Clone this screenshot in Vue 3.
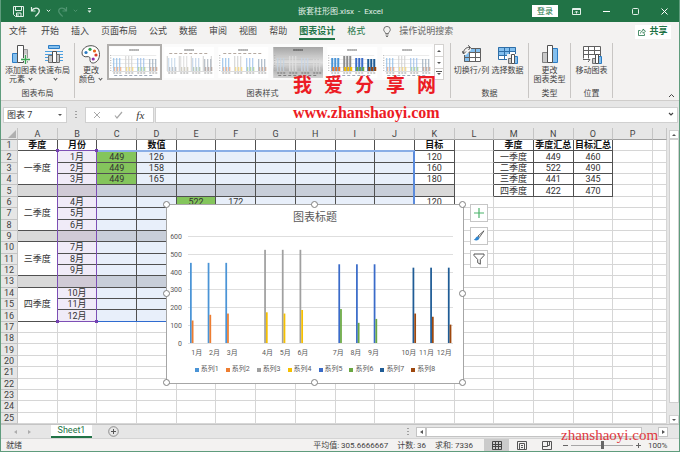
<script setup>
import { ref } from 'vue'

const tabs = ['文件', '开始', '插入', '页面布局', '公式', '数据', '审阅', '视图', '帮助', '图表设计', '格式']
const columns = 'ABCDEFGHIJKLMNOP'.split('').concat('')
const cellName = ref('图表 7')
const formula = ref('')
const zoom = ref(50)

const values = {
  A1: '季度', B1: '月份', D1: '数值', K1: '目标',
  A2: '一季度', A6: '二季度', A10: '三季度', A14: '四季度',
  B2: '1月', B3: '2月', B4: '3月', B6: '4月', B7: '5月', B8: '6月',
  B10: '7月', B11: '8月', B12: '9月', B14: '10月', B15: '11月', B16: '12月',
  C2: '449', C3: '449', C4: '449', D2: '126', D3: '158', D4: '165',
  E6: '522', F6: '172', K2: '120', K3: '160', K4: '180', K6: '120',
  M1: '季度', N1: '季度汇总', O1: '目标汇总',
  M2: '一季度', N2: '449', O2: '460', M3: '二季度', N3: '522', O3: '490',
  M4: '三季度', N4: '441', O4: '345', M5: '四季度', N5: '422', O5: '470'
}
const greens = ['C2', 'C3', 'C4', 'E6']
const quarterStarts = [2, 6, 10, 14]
const spacers = [5, 9, 13]

function rowCells(r) {
  const out = []
  columns.forEach((col, i) => {
    if (i === 0 && r > 1 && r < 17 && !quarterStarts.includes(r) && !spacers.includes(r)) return
    const key = col + r
    const inMain = i <= 10 && r <= 16
    const inSummary = i >= 12 && i <= 14 && r <= 5
    out.push({
      key: key + i,
      text: col ? values[key] || '' : '',
      span: i === 0 && quarterStarts.includes(r) ? 3 : 1,
      cls: {
        ruled: inMain || inSummary,
        edge: i === 11 && r <= 5,
        bold: r === 1,
        category: i === 1 && r > 1 && r < 17,
        series: i > 1 && i < 10 && r > 1 && r < 17,
        spacer: inMain && spacers.includes(r),
        green: greens.includes(key)
      }
    })
  })
  return out
}

const series = [
  { name: '系列1', color: '#4a94d6', at: 0, data: [449, 449, 449] },
  { name: '系列2', color: '#ed7d31', at: 0, data: [126, 158, 165] },
  { name: '系列3', color: '#a0a0a0', at: 4, data: [522, 522, 522] },
  { name: '系列4', color: '#f6c000', at: 4, data: [172, 165, 185] },
  { name: '系列5', color: '#3a6bc9', at: 8, data: [441, 441, 441] },
  { name: '系列6', color: '#6aa842', at: 8, data: [190, 113, 135] },
  { name: '系列7', color: '#1f5c96', at: 12, data: [422, 422, 422] },
  { name: '系列8', color: '#9e480e', at: 12, data: [165, 147, 103] }
]
const months = ['1月', '2月', '3月', '', '4月', '5月', '6月', '', '7月', '8月', '9月', '', '10月', '11月', '12月']
const ticks = [0, 100, 200, 300, 400, 500, 600]
const plotX = 21
const catW = 17.67
const baseY = 113
const unit = 0.1785
const bars = series.flatMap((s, k) =>
  s.data.map((v, j) => ({
    x: plotX + catW * (s.at + j) + 2 + k * 1.75,
    y: baseY - v * unit,
    h: v * unit,
    color: s.color
  }))
)

const soft = ['#8fbce6', '#f0a97c', '#cfcfcf', '#f5d676', '#9dc0ea', '#a9cf90', '#9aacbd', '#c9a088']
const strong = ['#4a94d6', '#ed7d31', '#8c8c8c', '#f6c000', '#3a6bc9', '#6aa842', '#1f5c96', '#9e480e']
const thumbs = [
  { top: false, palette: soft, w: 1, lines: true },
  { top: true, palette: ['#c4d8ea', '#aeb2b8', '#dcdcdc', '#c8c4b4', '#bcd0e6', '#a9bfa4', '#a6b0ba', '#b09c94'], w: 1, vert: true },
  { top: true, palette: soft, w: 1 },
  { top: false, palette: ['#c4d3e2', '#b9b9b9', '#e2e2e2', '#d0d0d0', '#c6d6ea', '#c8c8c8', '#dcdcdc', '#bdbdbd'], w: 1, dark: true, lines: true },
  { top: false, palette: strong, w: 2, lines: true },
  { top: false, palette: soft, w: 1, lines: true }
]
function thumbBars(t) {
  const out = []
  for (let g = 0; g < 4; g++) {
    for (let j = 0; j < 3; j++) {
      const x = 4 + g * 12 + j * 3
      const h = [13, 15, 13, 12][g]
      out.push({ x, y: 24 - h, w: t.w, h, c: t.palette[g * 2] })
      out.push({ x: x + 1, y: 20, w: t.w, h: 4, c: t.palette[g * 2 + 1] })
    }
  }
  return out
}
</script>

<template>
  <div class="app">
    <header class="titlebar">
      <div class="quick">
        <button aria-label="保存"><svg width="11" height="11" viewBox="0 0 11 11"><path d="M.5.5h10v10h-8l-2-2zM2.5.5v4h6v-4M3.500 10.500v-3.500h4.500v3.500M5 8v2" fill="none" stroke="#e4f0e9" /></svg></button>
        <button class="undo" aria-label="撤消"><svg width="11" height="11" viewBox="0 0 11 11"><path d="M1.500 1v4h4M1.800 4.800C3.500 1.500 8.500 1 9.300 4.500c.5 2.500-2.300 4-4 6" fill="none" stroke="#e4f0e9" stroke-width="1.200" /></svg></button>
        <svg width="5" height="4" viewBox="0 0 5 4"><path d="M.8.8l1.700 1.700L4.200.8" fill="none" stroke="#e4f0e9" /></svg>
        <button class="redo" aria-label="恢复"><svg width="11" height="11" viewBox="0 0 11 11"><path d="M9.500 1v4h-4M9.200 4.800C7.500 1.500 2.500 1 1.700 4.500c-.5 2.500 2.300 4 4 6" fill="none" stroke="#4f9470" stroke-width="1.200" /></svg></button>
        <svg width="5" height="4" viewBox="0 0 5 4"><path d="M.8.8l1.700 1.700L4.200.8" fill="none" stroke="#4f9470" /></svg>
        <svg class="more" width="5" height="6" viewBox="0 0 5 6"><path d="M1 .5h3" stroke="#e4f0e9" /><path d="M.5 2.500h4l-2 2.300z" fill="#e4f0e9" /></svg>
      </div>
      <h1>嵌套柱形图.xlsx&nbsp; -&nbsp; Excel</h1>
      <div class="window">
        <button class="login">登录</button>
        <button aria-label="功能区显示选项"><svg width="9" height="7" viewBox="0 0 9 7"><path d="M.5.5h8v6h-8zM.5 1.500h8M4.500 5.500v-2M3 4.500l1.500-1.500L6 4.500" fill="none" stroke="#e4f0e9" /></svg></button>
        <button aria-label="最小化"><svg width="7" height="7" viewBox="0 0 7 7"><path d="M0 3.500h7" stroke="#fff" /></svg></button>
        <button aria-label="最大化"><svg width="7" height="7" viewBox="0 0 7 7"><rect x=".5" y=".5" width="6" height="6" rx="1" fill="none" stroke="#e4f0e9" /></svg></button>
        <button aria-label="关闭"><svg width="7" height="7" viewBox="0 0 7 7"><path d="M.5.5l6 6M6.500.5l-6 6" stroke="#fff" /></svg></button>
      </div>
    </header>

    <nav class="tabs">
      <a v-for="t in tabs" :key="t" href="#" :class="{ current: t === '图表设计', context: t === '格式' }">{{ t }}</a>
      <button class="tell">
        <svg width="8" height="11" viewBox="0 0 8 11"><path d="M2.500 7.500C2.500 6 .7 5.500.7 3.700a3.300 3.300 0 0 1 6.600 0C7.300 5.500 5.500 6 5.500 7.500zM2.500 9h3M3 10.500h2" fill="none" stroke="#555" stroke-width=".8" /></svg>
        <span>操作说明搜索</span>
      </button>
      <button class="share">
        <svg width="8" height="8" viewBox="0 0 8 8"><path d="M2.500 2.500h-2v5h6v-2M2.500 5.500C2.700 3.500 4 2.700 5 2.700V1l2.500 2.300L5 5.300V3.900" fill="none" stroke="#217346" stroke-width=".8" /></svg>
        <span>共享</span>
      </button>
    </nav>

    <section class="ribbon">
      <div class="group layouts">
        <div class="tools">
          <button class="tool">
            <svg width="20" height="19" viewBox="0 0 20 19"><path d="M1.500 8.500h5v9h-5z" fill="#83bfee" stroke="#2b7cc4" /><path d="M12.500 4.500h4v13h-4z" fill="#c9c9c9" stroke="#9a9a9a" /><path d="M6.500.5h6v17h-6z" fill="#fff" stroke="#505050" /><path d="M14.500 9.500v9M10 14.500h9" stroke="#f3f2f1" stroke-width="3" /><path d="M14.500 10v9M10 14.500h9" stroke="#3aa655" stroke-width="1.300" /></svg>
            <span>添加图表<br>元素<i class="down"></i></span>
          </button>
          <button class="tool">
            <svg width="20" height="19" viewBox="0 0 20 19"><path d="M4.500.5h11v3h-11z" fill="#83bfee" stroke="#2b7cc4" /><path d="M1 6.500h18M1 9.500h18M1 12.500h18M1 15.500h18" stroke="#4a9fe0" /><path d="M4.500 10.500h4v7h-4z" fill="#c9c9c9" stroke="#707070" /><path d="M8.500 6.500h4v11h-4z" fill="#fff" stroke="#505050" /><path d="M12.500 9.500h3v8h-3z" fill="#c9c9c9" stroke="#707070" /></svg>
            <span>快速布局<br><i class="down"></i></span>
          </button>
        </div>
        <h2>图表布局</h2>
      </div>

      <div class="group styles">
        <div class="tools">
          <button class="tool">
            <svg width="20" height="19" viewBox="0 0 20 19"><path d="M10 .7C4.500.7 1 4.300 1 8c0 3 2.500 4.200 5 3.700 2.200-.4 3.300.6 3 2.300-.3 2.500 1 4.300 3.300 4C16 17.500 18.500 14 18.500 9.500 18.500 4 14.800.7 10 .7z" fill="#fff" stroke="#505050" /><circle cx="5" cy="7.500" r="1.600" fill="#2b7cc4" /><circle cx="9" cy="4.300" r="1.600" fill="#31a04f" /><circle cx="13.500" cy="6" r="1.600" fill="#e8661b" /><circle cx="15" cy="10" r="1.600" fill="#d93a2b" /><circle cx="12.200" cy="14" r="1.600" fill="#8d2fa8" /></svg>
            <span>更改<br>颜色<i class="down"></i></span>
          </button>
          <div class="gallery">
            <button v-for="(t, i) in thumbs" :key="i" class="thumb" :class="{ selected: i === 0 }" :aria-label="'样式 ' + (i + 1)">
              <svg viewBox="0 0 50 31" width="100%" height="31">
                <defs>
                  <linearGradient id="metal" x1="0" x2="0" y1="0" y2="1"><stop offset="0" stop-color="#a6a6a6" /><stop offset=".5" stop-color="#dedede" /><stop offset=".75" stop-color="#b4b4b4" /><stop offset="1" stop-color="#d2d2d2" /></linearGradient>
                </defs>
                <rect width="50" height="31" :fill="t.dark ? 'url(#metal)' : '#fff'" />
                <path d="M20 3h10" :stroke="t.dark ? '#555' : '#8a8a8a'" stroke-width="1.400" stroke-dasharray="1.600 .4" />
                <path v-if="t.top" d="M5 6.500h40" stroke="#b5a9a0" stroke-dasharray="3 2" />
                <path v-if="t.lines" d="M3 8.500h44M3 12.500h44M3 16.500h44M3 20.500h44" :stroke="t.dark ? '#c6c6c6' : '#e2e2e2'" stroke-width=".7" />
                <path v-if="t.vert" d="M3 9v15M15 9v15M27 9v15M39 9v15M47 9v15" stroke="#d0d0d0" />
                <path v-if="!t.vert" d="M1.500 8v17" stroke="#aaa" stroke-dasharray="1 1.500" />
                <rect v-for="(b, k) in thumbBars(t)" :key="k" :x="b.x" :y="b.y" :width="b.w" :height="b.h" :fill="b.c" />
                <path d="M3 24.500h44" stroke="#c4c4c4" stroke-width=".6" />
                <path d="M4 26h8M16 26h8M28 26h8M40 26h8" :stroke="t.dark ? '#707070' : '#9a9a9a'" stroke-dasharray="2 1" />
                <path v-if="!t.top" d="M5 28.500h40" :stroke="t.dark ? '#808080' : '#9ea9b8'" stroke-dasharray="3 2" />
              </svg>
            </button>
          </div>
          <div class="pager">
            <button aria-label="上一行"><i class="up-tri"></i></button>
            <button aria-label="下一行"><i class="down-tri"></i></button>
            <button aria-label="其他"><i class="down-tri lined"></i></button>
          </div>
        </div>
        <h2>图表样式</h2>
      </div>

      <div class="group data">
        <div class="tools">
          <button class="tool">
            <svg width="20" height="19" viewBox="0 0 20 19"><path d="M2.500 3.500h16v13h-16z" fill="#fff" /><path d="M2 3h17v5H8v9H2z" fill="#83bfee" /><path d="M2.500 3.500h16v13h-16zM7.500 3.500v13M13.500 3.500v13M2.500 7.500h16M2.500 12.500h16" fill="none" stroke="#606060" /><path d="M0 0h9v5L4 10H0z" fill="#f3f2f1" /><path d="M1.500 8.500C1.500 4.500 4 2 8 2.500M6 .3l2.500 2.200L6.500 5M0 6l1.500 3L4 6.500" fill="none" stroke="#505050" /></svg>
            <span>切换行/列</span>
          </button>
          <button class="tool">
            <svg width="20" height="19" viewBox="0 0 20 19"><path d="M.5 2.500h17v12H.5z" fill="#fff" /><path d="M0 2h18v4H0zM0 6h12v4H0z" fill="#83bfee" /><path d="M.5 2.500h17v12H.5zM6.500 2.500v12M11.500 2.500v12M.5 6.500h17M.5 10.500h17" fill="none" stroke="#2f6fa8" /><path d="M9 9h11v10H9z" fill="#f3f2f1" /><path d="M10.500 13.500h3v5h-3z" fill="#c9c9c9" stroke="#707070" /><path d="M16.500 11.500h3v7h-3z" fill="#83bfee" stroke="#2b7cc4" /><path d="M13.500 9.500h3v9h-3z" fill="#fff" stroke="#505050" /></svg>
            <span>选择数据</span>
          </button>
        </div>
        <h2>数据</h2>
      </div>

      <div class="group single">
        <div class="tools">
          <button class="tool">
            <svg width="20" height="19" viewBox="0 0 20 19"><path d="M2.500 7.500h5v10h-5z" fill="#c9c9c9" stroke="#808080" /><path d="M12.500 3.500h5v14h-5z" fill="#83bfee" stroke="#2b7cc4" /><path d="M7.500.5h5v17h-5z" fill="#fff" stroke="#505050" /></svg>
            <span>更改<br>图表类型</span>
          </button>
        </div>
        <h2>类型</h2>
      </div>

      <div class="group single">
        <div class="tools">
          <button class="tool">
            <svg width="20" height="19" viewBox="0 0 20 19"><path d="M1.500 1.500h17v12l-10 1-1.500 3-5.500-3z" fill="#fff" /><path d="M1.500 13.500v-12h17v10M6.500 1.500v12M12.500 1.500v8M1.500 5.500h17M1.500 9.500h17M1 14.500h7l-2 2.500" fill="none" stroke="#606060" /><path d="M10.500 13.500h3v5h-3z" fill="#c9c9c9" stroke="#707070" /><path d="M16.500 11.500h3v7h-3z" fill="#83bfee" stroke="#2b7cc4" /><path d="M13.500 9.500h3v9h-3z" fill="#fff" stroke="#505050" /></svg>
            <span>移动图表</span>
          </button>
        </div>
        <h2>位置</h2>
      </div>
      <button class="collapse" aria-label="折叠功能区"><svg width="7" height="5" viewBox="0 0 7 5"><path d="M1 4l2.500-2.500L6 4" fill="none" stroke="#444" /></svg></button>
    </section>

    <section class="formula-row">
      <div class="namebox">
        <input v-model="cellName" aria-label="名称框">
        <button aria-label="名称列表"><i class="down-tri"></i></button>
      </div>
      <i class="dots"></i>
      <div class="fx">
        <button aria-label="取消"><svg width="8" height="8" viewBox="0 0 8 8"><path d="M1 1l6 6M7 1L1 7" stroke="#a8a8a8" /></svg></button>
        <button aria-label="输入"><svg width="9" height="8" viewBox="0 0 9 8"><path d="M1 4.500L3 7l5-6" fill="none" stroke="#a8a8a8" stroke-width="1.200" /></svg></button>
        <button class="fn">fx</button>
      </div>
      <div class="formula">
        <input v-model="formula" aria-label="编辑栏">
        <button aria-label="展开编辑栏"><svg width="6" height="5" viewBox="0 0 6 5"><path d="M1 1l2 2 2-2" fill="none" stroke="#444" stroke-width="1.200" /></svg></button>
      </div>
    </section>

    <main class="sheet">
      <div class="cells">
        <table>
          <colgroup>
            <col class="c-head">
            <col v-for="n in 16" :key="n">
            <col class="c-last">
          </colgroup>
          <thead>
            <tr>
              <th class="corner"><i></i></th>
              <th v-for="(c, i) in columns" :key="i">{{ c }}</th>
            </tr>
          </thead>
          <tbody>
            <tr v-for="r in 25" :key="r">
              <th>{{ r }}</th>
              <td v-for="c in rowCells(r)" :key="c.key" :rowspan="c.span" :class="c.cls">{{ c.text }}</td>
            </tr>
          </tbody>
        </table>
        <div class="ranges">
          <div class="range values"></div>
          <div class="range cats"><i></i><i></i><i></i><i></i></div>
        </div>

        <figure class="chart">
          <figcaption>图表标题</figcaption>
          <svg class="plot" width="296" height="130" viewBox="0 0 296 130">
            <g v-for="t in ticks" :key="t">
              <path :d="`M${plotX} ${Math.round(baseY - t * unit) + 0.5}h265`" stroke="#dedede" />
              <text x="15" :y="Math.round(baseY - t * unit) + 3" text-anchor="end">{{ t }}</text>
            </g>
            <rect v-for="(b, i) in bars" :key="'b' + i" :x="b.x" :y="b.y" width="1.750" :height="b.h" :fill="b.color" />
            <text v-for="(m, i) in months" :key="'m' + i" :x="plotX + catW * (i + 0.5)" y="125" text-anchor="middle">{{ m }}</text>
          </svg>
          <ul class="legend">
            <li v-for="s in series" :key="s.name"><i :style="{ background: s.color }"></i>{{ s.name }}</li>
          </ul>
          <b v-for="n in 8" :key="n" class="handle" :class="'h' + n"></b>
          <div class="side">
            <button aria-label="图表元素"><svg width="12" height="12" viewBox="0 0 12 12"><path d="M6 1v10M1 6h10" stroke="#4bb36b" stroke-width="1.200" /></svg></button>
            <button aria-label="图表样式"><svg width="12" height="12" viewBox="0 0 12 12"><path d="M11 .8L5 6l1.300 1.500z" fill="#fff" stroke="#555" stroke-width=".9" /><path d="M4.800 6.200C3 6.300 3 8.500.8 9.800c2.200 1.300 5.400.7 5.600-1.800z" fill="#2f86d0" /></svg></button>
            <button aria-label="图表筛选器"><svg width="12" height="12" viewBox="0 0 12 12"><path d="M1 1h10v1.500L7.300 6.500v4.700L4.700 9.700V6.500L1 2.500z" fill="none" stroke="#555" /></svg></button>
          </div>
        </figure>
      </div>
      <div class="vscroll">
        <button aria-label="向上滚动"><i class="up-tri"></i></button>
        <div class="vthumb"></div>
        <button aria-label="向下滚动"><i class="down-tri"></i></button>
      </div>
    </main>

    <section class="sheetbar">
      <div class="nav"><i class="left-tri pale"></i><i class="right-tri pale"></i></div>
      <a class="sheet-tab" href="#">Sheet1</a>
      <button class="add" aria-label="新工作表"><svg width="11" height="11" viewBox="0 0 11 11"><circle cx="5.500" cy="5.500" r="4.800" fill="none" stroke="#777" stroke-width=".8" /><path d="M5.500 3v5M3 5.500h5" stroke="#555" /></svg></button>
      <div class="hscroll">
        <i class="dots"></i>
        <button aria-label="向左滚动"><i class="left-tri"></i></button>
        <div class="hthumb"></div>
        <button aria-label="向右滚动"><i class="right-tri"></i></button>
      </div>
    </section>

    <footer class="status">
      <span>就绪</span>
      <div class="stats"><span>平均值: 305.6666667</span><span>计数: 36</span><span>求和: 7336</span></div>
      <div class="views">
        <button class="on" aria-label="普通"><svg width="10" height="9" viewBox="0 0 10 9"><path d="M.5.5h9v8h-9zM3.500.5v8M6.500.5v8M.5 3.500h9M.5 5.500h9" fill="none" stroke="#444" /></svg></button>
        <button aria-label="页面布局"><svg width="10" height="9" viewBox="0 0 10 9"><path d="M.5.5h9v8h-9zM2.500 2.500h5v6M2.500 2.500v6M4 4.500h2M4 6.500h2" fill="none" stroke="#555" /></svg></button>
        <button aria-label="分页预览"><svg width="10" height="9" viewBox="0 0 10 9"><path d="M.5.5h9v8h-9zM.5 5.500h5v-5M5.500 4.500h2v-4" fill="none" stroke="#555" /></svg></button>
      </div>
      <div class="zoom">
        <button aria-label="缩小"><svg width="5" height="5" viewBox="0 0 5 5"><path d="M0 2.500h5" stroke="#666" /></svg></button>
        <input v-model="zoom" type="range" min="0" max="100" aria-label="缩放">
        <button aria-label="放大"><svg width="5" height="5" viewBox="0 0 5 5"><path d="M0 2.500h5M2.500 0v5" stroke="#666" /></svg></button>
        <span>100%</span>
      </div>
    </footer>

    <div class="mark">
      <p class="cn"><span>我</span><span>爱</span><span>分</span><span>享</span><span>网</span></p>
      <p class="url">www.zhanshaoyi.com</p>
    </div>
    <p class="mark-small">zhanshaoyi.com</p>
  </div>
</template>

<style>
body { margin: 0; }
</style>

<style scoped>
.app, .app * { box-sizing: border-box; }
.app {
  position: relative;
  display: flex;
  flex-direction: column;
  min-height: 100vh;
  border: solid #5f9c7d;
  border-width: 0 1px 1px;
  background: #e6e6e6;
  color: #444;
  font: 8px/9px Roboto, "Noto Sans CJK SC", sans-serif;
  overflow: hidden;
}
button, input { margin: 0; padding: 0; border: 0; background: none; color: inherit; font: inherit; }
button { display: flex; align-items: center; justify-content: center; }
a { color: inherit; text-decoration: none; }
h1, h2, p, ul, figure { margin: 0; padding: 0; font-weight: 400; font-size: 8px; }
svg { display: block; flex: none; }

.titlebar {
  display: grid;
  grid-template-columns: 1fr auto 1fr;
  align-items: center;
  height: 22px;
  margin: 0 -1px;
  padding: 0 12px 0 13px;
  background: #217346;
  color: #e4f0e9;
}
.quick { display: flex; align-items: center; gap: 5px; }
.undo { margin-left: 1px; }
.redo { margin-left: 1px; }
.more { margin-left: 4px; }
.window { display: flex; align-items: center; justify-content: flex-end; gap: 22px; }
.login { width: 26px; height: 12px; background: #fff; color: #217346; }
.window .login { margin-right: -8px; }

.tabs { display: flex; align-items: center; gap: 12px; height: 19px; padding: 0 8px; background: #f3f2f1; font-size: 9px; }
.tabs a { height: 17px; line-height: 16px; white-space: nowrap; }
.tabs a:first-child { margin-right: 2px; }
.tabs .current { border-bottom: 2px solid #217346; color: #217346; font-weight: 700; }
.tabs .context { color: #217346; }
.tell { gap: 8px; margin-left: 6px; color: #666; }
.share { gap: 3px; width: 36px; height: 14px; margin-left: auto; background: #fff; color: #217346; font-weight: 700; }

.ribbon { position: relative; display: flex; height: 60px; padding-top: 2px; border-bottom: 1px solid #cfcdcb; background: #f3f2f1; }
.group { display: flex; flex-direction: column; justify-content: space-between; align-items: center; height: 55px; border-right: 1px solid #c8c6c4; }
.layouts { width: 74px; }
.styles { flex: 0 1 376px; }
.data { width: 78px; }
.single { width: 42px; }
.group h2 { line-height: 9px; }
.tools { display: flex; width: 100%; justify-content: center; align-items: flex-start; }
.tool { flex-direction: column; gap: 2px; width: 34px; padding-top: 2px; line-height: 9px; white-space: nowrap; }
.layouts .tool { width: 33px; }
.styles .tool { width: 32px; }
.data .tool { width: 36px; }
.down { display: inline-block; width: 3px; height: 3px; margin: 0 1px 2px 4px; border: solid #555; border-width: 0 1px 1px 0; transform: rotate(45deg); }
.gallery { display: flex; flex: 1; height: 36px; margin-top: 1px; background: #fbfbfb; }
.thumb { flex: 1; padding: 2px; height: 36px; }
.selected { border: 2px solid #b0aeac; padding: 0; }
.pager { width: 10px; margin-top: 1px; margin-right: 6px; border: 1px solid #d4d2d0; background: #fff; }
.pager button { width: 100%; height: 12px; border-bottom: 1px solid #d4d2d0; }
.pager button:last-child { height: 10px; border-bottom: 0; }
.collapse { position: absolute; right: 4px; bottom: 2px; }

.up-tri, .down-tri, .left-tri, .right-tri { display: block; width: 0; height: 0; border: 2px solid transparent; }
.up-tri { border-top: 0; border-bottom-color: #555; }
.down-tri { border-bottom: 0; border-top-color: #555; }
.left-tri { border-left: 0; border-right: 3px solid #555; }
.right-tri { border-right: 0; border-left: 3px solid #555; }
.pale { opacity: .4; }
.lined { position: relative; }
.lined::before { content: ""; position: absolute; left: -3px; top: -4px; width: 6px; height: 1px; background: #555; }
.dots { width: 2px; height: 8px; background: repeating-linear-gradient(#a0a0a0 0 1px, transparent 1px 3px); }

.formula-row { display: flex; align-items: center; height: 27px; padding: 0 1px 0 2px; font-size: 9px; }
.namebox, .fx, .formula { display: flex; align-items: center; height: 16px; border: 1px solid #d0d0d0; background: #fff; }
.namebox { width: 64px; padding: 0 4px 0 3px; color: #333; }
.namebox input { flex: 1; min-width: 0; }
.formula-row .dots { margin: 0 8px; }
.fx { width: 69px; justify-content: space-around; padding-right: 2px; }
.fn { color: #333; font: italic 400 11px/12px "Liberation Serif", serif; }
.formula { flex: 1; margin-left: 1px; padding-right: 3px; }
.formula input { flex: 1; }

.sheet { display: flex; flex: 1; min-height: 296px; }
.cells { position: relative; flex: 1; display: flex; background: #fff; }
table { width: 100%; table-layout: fixed; border-collapse: separate; border-spacing: 0; font-size: 9px; line-height: 10px; }
.c-head { width: 17px; }
.c-last { width: 14px; }
th, td { padding: 0; text-align: center; vertical-align: middle; white-space: nowrap; border: solid #d6d6d6; border-width: 0 1px 1px 0; }
th { background: #e6e6e6; color: #444; font-weight: 400; border-color: #c4c4c4; }
thead th { height: 12px; border-bottom-color: #9f9f9f; }
td { color: #333; }
.ruled { border-color: #505050; }
.edge { border-right-color: #505050; }
.bold { color: #111; font-weight: 700; }
.category { background: #f0ebf8; }
.series { background: #e8effa; }
.spacer { background: #d9d9d9; }
.spacer.category { background: #d0cad6; }
.spacer.series { background: #c8ced9; }
.green { background: #84c55c; }
.corner i { display: block; width: 0; height: 0; margin-left: auto; margin-right: 1px; border: solid transparent; border-width: 0 0 8px 8px; border-bottom-color: #b0b0b0; }

.ranges { position: absolute; inset: 0; display: grid; grid-template-columns: 17px repeat(16, 1fr) 14px; grid-template-rows: 12px repeat(25, 1fr); pointer-events: none; }
.range { margin: -1px 0 0 -1px; border: 1px solid #5b8bdc; }
.values { grid-area: 3 / 4 / 18 / 12; border-top: 2px solid #8aaee6; border-bottom-color: #2f6bd0; border-right-width: 2px; }
.cats { position: relative; grid-area: 3 / 3 / 18 / 4; border: 1px solid #7d4fb5; }
.cats i { position: absolute; width: 3px; height: 3px; background: #7440b0; }
.cats i:nth-child(1) { left: -2px; top: -2px; }
.cats i:nth-child(2) { right: -2px; top: -2px; }
.cats i:nth-child(3) { left: -2px; bottom: -2px; }
.cats i:nth-child(4) { right: -2px; bottom: -2px; }

.chart { position: absolute; left: 165px; top: 76px; display: flex; flex-direction: column; align-items: center; width: 298px; height: 180px; padding-top: 5px; border: 1px solid #a6a6a6; background: #fff; color: #595959; }
figcaption { font-size: 11px; line-height: 16px; }
.plot { overflow: visible; margin-top: 4px; font-size: 7px; fill: #595959; }
.legend { display: flex; gap: 7px; margin-top: 5px; list-style: none; }
.legend li { display: flex; align-items: center; gap: 2px; font-size: 7px; line-height: 9px; }
.legend i { width: 4px; height: 4px; }
.handle { position: absolute; width: 7px; height: 7px; margin: -4px; border: 1px solid #808080; border-radius: 50%; background: #fff; }
.h1, .h2, .h3 { top: 0; }
.h4, .h5 { top: 50%; }
.h6, .h7, .h8 { top: 100%; }
.h1, .h4, .h6 { left: 0; }
.h2, .h7 { left: 50%; }
.h3, .h5, .h8 { left: 100%; }
.side { position: absolute; left: 303px; top: -1px; display: flex; flex-direction: column; gap: 5px; }
.side button { width: 18px; height: 18px; border: 1px solid #c6c6c6; background: #fff; }

.vscroll { display: flex; flex-direction: column; width: 12px; padding: 2px 0 0 2px; }
.vscroll button { height: 9px; border: 1px solid #d0d0d0; background: #fff; }
.vthumb { flex: 1; margin: 0 0 12px; border: 1px solid #d0d0d0; background: #fff; }

.sheetbar { display: flex; height: 14px; border-top: 1px solid #c4c4c4; }
.nav { display: flex; align-items: center; gap: 11px; width: 50px; padding-left: 13px; }
.sheet-tab { width: 41px; height: 13px; border-bottom: 2px solid #217346; background: #fff; color: #217346; font-size: 9px; line-height: 11px; text-align: center; }
.add { margin-left: 16px; }
.hscroll { display: flex; align-items: center; flex: 0 1 272px; margin-left: auto; padding-right: 11px; }
.hscroll .dots { margin-right: 7px; }
.hscroll button { width: 10px; height: 10px; border: 1px solid #c4c4c4; background: #fff; }
.hthumb { flex: 1; height: 10px; margin-right: 16px; border: 1px solid #c4c4c4; background: #fff; }

.status { display: flex; align-items: center; height: 13px; padding: 0 10px 0 5px; border-top: 1px solid #d4d4d4; background: #f3f2f1; }
.stats { display: flex; gap: 9px; margin-left: auto; }
.views { display: flex; height: 100%; margin-left: 11px; }
.views button { width: 25px; }
.views .on { background: #cbcbcb; }
.zoom { display: flex; align-items: center; gap: 3px; margin-left: 4px; }
.zoom span { width: 21px; margin-left: 4px; }
.zoom input { appearance: none; width: 62px; height: 10px; background: linear-gradient(#a6a6a6, #a6a6a6) center / 100% 1px no-repeat; }
.zoom input::-webkit-slider-thumb { appearance: none; width: 3px; height: 8px; background: #666; }

.mark { position: absolute; left: 292px; top: 75px; color: #ec1c24; pointer-events: none; }
.cn { display: flex; gap: 12px; font-size: 19px; line-height: 22px; font-weight: 700; }
.url { margin-top: 7px; font: 700 16px/18px "Liberation Serif", serif; }
.mark-small { position: absolute; left: 560px; top: 427px; color: #e0393e; font: 15px/17px "Liberation Serif", serif; pointer-events: none; }
</style>
